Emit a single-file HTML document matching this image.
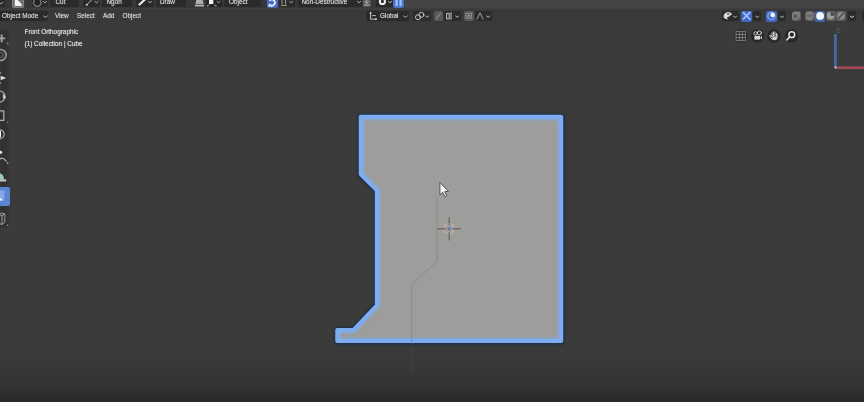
<!DOCTYPE html>
<html><head><meta charset="utf-8">
<style>
html,body{margin:0;padding:0;}
body{width:864px;height:402px;overflow:hidden;background:#3b3b3b;position:relative;font-family:"Liberation Sans",sans-serif;font-size:6.4px;color:#c8c8c8;}
.a{position:absolute;}
.t{position:absolute;white-space:nowrap;line-height:8px;height:8px;filter:blur(0.55px);text-shadow:0 0 0.7px #c9c9c9;}
.bx{position:absolute;border-radius:2px;filter:blur(0.6px);}
svg{position:absolute;left:0;top:0;overflow:visible;}
#fade{position:absolute;left:0;top:340px;width:864px;height:62px;background:linear-gradient(to bottom,rgba(0,0,0,0) 0%,rgba(0,0,0,0.05) 38%,rgba(0,0,0,0.13) 70%,rgba(0,0,0,0.22) 88%,rgba(0,0,0,0.32) 100%);}
</style></head><body>
<!-- top strip / header backgrounds -->
<div class="a" id="strip" style="left:0;top:0;width:864px;height:12px;background:linear-gradient(to bottom,#454545 0px,#444444 7px,#3d3d3d 9px,#373737 10.8px,#393939 12px);"></div>
<div class="a" id="hdr" style="left:0;top:12px;width:864px;height:11px;background:#393939;"></div>
<div class="a" id="stripL" style="left:0;top:0;width:406px;height:8px;background:linear-gradient(to right,#373737 0px,#373737 396px,rgba(55,55,55,0) 406px);filter:blur(0.7px);"></div>
<div class="a" id="tbar" style="left:0;top:30px;width:8px;height:198px;background:#313131;filter:blur(0.8px);"></div>

<!-- top strip widgets -->
<div class="bx" style="left:-3px;top:-3px;width:8px;height:10px;background:#2a2a2a;"></div>
<div class="bx" style="left:12px;top:-3px;width:12px;height:11px;background:#707070;"></div>
<div class="bx" style="left:31.5px;top:-3px;width:16.5px;height:10px;background:#2a2a2a;"></div>
<div class="bx" style="left:50px;top:-3px;width:29px;height:10px;background:#2a2a2a;"></div>
<div class="bx" style="left:83px;top:-3px;width:17px;height:10px;background:#2a2a2a;"></div>
<div class="bx" style="left:102px;top:-3px;width:30px;height:10px;background:#2a2a2a;"></div>
<div class="bx" style="left:136px;top:-3px;width:18px;height:10px;background:#2a2a2a;"></div>
<div class="bx" style="left:156px;top:-3px;width:30px;height:10px;background:#2a2a2a;"></div>
<div class="bx" style="left:205.5px;top:-3px;width:16px;height:10px;background:#242424;"></div>
<div class="bx" style="left:224px;top:-3px;width:37px;height:10px;background:#2a2a2a;"></div>
<div class="bx" style="left:267px;top:-3px;width:10.5px;height:10.5px;background:#466cc2;"></div>
<div class="bx" style="left:279px;top:-3px;width:15.5px;height:10px;background:#2a2a2a;"></div>
<div class="bx" style="left:298px;top:-3px;width:64px;height:10px;background:#2a2a2a;"></div>
<div class="bx" style="left:362.5px;top:-3px;width:8.5px;height:10px;background:#5c5c5c;"></div>
<div class="bx" style="left:376px;top:-3px;width:17px;height:10px;background:#2a2a2a;"></div>
<div class="bx" style="left:393px;top:-3px;width:11px;height:10.5px;background:#4a74c8;"></div>

<div class="t" style="left:55.5px;top:-1.7px;">Cut</div>
<div class="t" style="left:106.5px;top:-1.7px;">Ngon</div>
<div class="t" style="left:160px;top:-1.7px;">Draw</div>
<div class="t" style="left:229px;top:-1.7px;">Object</div>
<div class="t" style="left:301.5px;top:-1.7px;">Non-Destructive</div>

<!-- header row -->
<div class="bx" style="left:-3px;top:11.3px;width:51px;height:9.4px;background:#2a2a2a;"></div>
<div class="t" style="left:2px;top:12px;">Object Mode</div>
<div class="t" style="left:55px;top:12px;">View</div>
<div class="t" style="left:77px;top:12px;">Select</div>
<div class="t" style="left:103px;top:12px;">Add</div>
<div class="t" style="left:122.5px;top:12px;">Object</div>

<div class="bx" style="left:366px;top:10.5px;width:43px;height:10.5px;background:#2a2a2a;"></div>
<div class="t" style="left:380px;top:12px;">Global</div>
<div class="bx" style="left:413px;top:10.5px;width:18px;height:10.5px;background:#2c2c2c;"></div>
<div class="bx" style="left:434px;top:10.5px;width:9px;height:10.5px;background:#585858;"></div>
<div class="bx" style="left:443.5px;top:10.5px;width:17px;height:10.5px;background:#2a2a2a;"></div>
<div class="bx" style="left:464px;top:10.5px;width:10px;height:10.5px;background:#585858;"></div>
<div class="bx" style="left:474.5px;top:10.5px;width:17px;height:10.5px;background:#2c2c2c;"></div>

<!-- right header -->
<div class="bx" style="left:721.5px;top:10.5px;width:17px;height:10.5px;background:#2a2a2a;"></div>
<div class="bx" style="left:741px;top:10.5px;width:11px;height:11px;background:#4369c2;"></div>
<div class="bx" style="left:753px;top:10.5px;width:8px;height:10.5px;background:#2a2a2a;"></div>
<div class="bx" style="left:766px;top:10.5px;width:10.5px;height:11px;background:#4369c2;"></div>
<div class="bx" style="left:777.5px;top:10.5px;width:8px;height:10.5px;background:#2a2a2a;"></div>
<div class="bx" style="left:791.5px;top:11px;width:9px;height:9.5px;background:#5a5a5a;"></div>
<div class="bx" style="left:804.5px;top:10.5px;width:10.2px;height:10.5px;background:#5c5c5c;"></div>
<div class="bx" style="left:815px;top:10.5px;width:10.2px;height:11px;background:#4265a6;"></div>
<div class="bx" style="left:825.5px;top:10.5px;width:10.2px;height:10.5px;background:#5c5c5c;"></div>
<div class="bx" style="left:836px;top:10.5px;width:10.2px;height:10.5px;background:#5c5c5c;"></div>
<div class="bx" style="left:848px;top:10.5px;width:8px;height:10.5px;background:#2a2a2a;"></div>
<div class="bx" style="left:861.5px;top:10.5px;width:9px;height:10.5px;background:#2a2a2a;"></div>

<!-- viewport text -->
<div class="t" style="left:24.5px;top:28.3px;color:#dcdcdc;">Front Orthographic</div>
<div class="t" style="left:24.5px;top:39.5px;color:#dcdcdc;">(1) Collection | Cube</div>

<!-- toolbar selected -->
<div class="bx" style="left:-3px;top:186.5px;width:13px;height:19.5px;background:#5b84d2;border-radius:2px;"></div>

<!-- main svg -->
<svg width="864" height="402" viewBox="0 0 864 402">
  <defs>
    <filter id="b1" x="-5%" y="-5%" width="110%" height="110%"><feGaussianBlur stdDeviation="0.75"/></filter>
    <filter id="b2" x="-20%" y="-20%" width="140%" height="140%"><feGaussianBlur stdDeviation="0.55"/></filter>
    <filter id="b3" x="-20%" y="-20%" width="140%" height="140%"><feGaussianBlur stdDeviation="0.6"/></filter>
    <filter id="b4" x="-5%" y="-5%" width="110%" height="110%"><feGaussianBlur stdDeviation="0.75"/></filter>
    <filter id="b6" x="-5%" y="-5%" width="110%" height="110%"><feGaussianBlur stdDeviation="0.9"/></filter>
    <filter id="b5" x="-5%" y="-5%" width="110%" height="110%"><feGaussianBlur stdDeviation="1.3"/></filter>
    <clipPath id="cpB"><polygon points="360.8,116.9 561.2,116.9 561.2,340.9 337.3,340.9 337.3,330.1 353.4,330.1 376.9,305.3 376.9,190.2 360.8,174.2"/></clipPath>
  </defs>
  <g filter="url(#b6)" transform="translate(0.4,0.35)">
  <polygon points="360.8,116.9 561.2,116.9 561.2,340.9 337.3,340.9 337.3,330.1 353.4,330.1 376.9,305.3 376.9,190.2 360.8,174.2" fill="none" stroke="#1f2f4a" stroke-width="6.9" stroke-linejoin="round"/>
  </g>
  <polygon points="360.8,116.9 561.2,116.9 561.2,340.9 337.3,340.9 337.3,330.1 353.4,330.1 376.9,305.3 376.9,190.2 360.8,174.2" fill="#9d9d9b" stroke="none"/>
  <g clip-path="url(#cpB)">
    <polygon points="360.8,116.9 561.2,116.9 561.2,340.9 337.3,340.9 337.3,330.1 353.4,330.1 376.9,305.3 376.9,190.2 360.8,174.2" fill="none" stroke="#86aee8" stroke-width="7" stroke-linejoin="round" filter="url(#b5)" opacity="0.6"/>
  </g>
  <g filter="url(#b4)">
  <polygon points="360.8,116.9 561.2,116.9 561.2,340.9 337.3,340.9 337.3,330.1 353.4,330.1 376.9,305.3 376.9,190.2 360.8,174.2" fill="none" stroke="#7eacf0" stroke-width="4.1" stroke-linejoin="round"/>
  </g>
  <g filter="url(#b1)">
  <polyline points="437,196 437,261.5 411.6,284.5 411.6,338" fill="none" stroke="#898989" stroke-width="0.9"/>
  <line x1="411.6" y1="338" x2="411.6" y2="343.5" stroke="#6f92c6" stroke-width="0.9"/><line x1="411.6" y1="346" x2="411.6" y2="375" stroke="#464646" stroke-width="1"/>
  </g>
  <!-- 3D cursor -->
  <g filter="url(#b1)">
    <circle cx="449.2" cy="228.7" r="5" fill="none" stroke="#c4979a" stroke-width="1.8" stroke-dasharray="2 2"/>
    <circle cx="449.2" cy="228.7" r="5" fill="none" stroke="#e6dcdc" stroke-width="1.4" stroke-dasharray="2 2" stroke-dashoffset="2" opacity="0.55"/>
    <path d="M437.6 228.7H445.6M452.8 228.7H460.8M449.2 217.2V225.1M449.2 232.3V240.4" stroke="#6c6c6c" stroke-width="1.4" fill="none"/>
    <circle cx="449.2" cy="228.7" r="1.7" fill="#6480a8"/>
  </g>
  <!-- mouse cursor -->
  <g filter="url(#b3)">
    <path d="M439.90 182.40 L439.90 194.91 L442.75 192.34 L444.78 196.75 L446.71 195.83 L444.68 191.60 L448.46 191.42 Z" fill="#f2f2f2" stroke="#555" stroke-width="1" stroke-linejoin="round"/>
  </g>
  <!-- axis gizmo -->
  <g filter="url(#b2)">
    <line x1="835.4" y1="34" x2="835.4" y2="68" stroke="#4269a4" stroke-width="2.8"/>
    <line x1="835.4" y1="67.7" x2="866" y2="67.7" stroke="#a94858" stroke-width="2.5"/>
    <circle cx="835.6" cy="67.6" r="1" fill="#d8d0d8"/>
    <path d="M836.8 28.8H839.6L836.8 32.4H839.6" stroke="#4d6694" stroke-width="0.8" fill="none" opacity="0.85"/>
  </g>
</svg>

<!-- icons svg -->
<svg width="864" height="402" viewBox="0 0 864 402">
  <g filter="url(#b2)" fill="none" stroke-linecap="round" stroke-linejoin="round">
    <!-- top strip icons -->
    <path d="M-1 2.2L1 3.8L3 2.2" stroke="#bbb" stroke-width="0.9"/>
    <rect x="12.6" y="-2" width="11" height="9.3" rx="1" stroke="#8a8a8a" stroke-width="0.8"/>
    <path d="M14.8 -1H16.6L21.6 4V6H14.8Z" fill="#f2f2f2" stroke="none"/>
    <circle cx="37.3" cy="2.6" r="3.7" stroke="#7c7c7c" stroke-width="1.3" fill="#232323"/>
    <path d="M43.4 1.4L45 2.8L46.6 1.4" stroke="#bbb" stroke-width="0.9"/>
    <path d="M87 4.6L92.4 -1" stroke="#bdbdbd" stroke-width="1"/>
    <circle cx="86.8" cy="4.8" r="1.1" fill="#c8c8c8" stroke="none"/>
    <path d="M95 1.4L96.6 2.8L98.2 1.4" stroke="#bbb" stroke-width="0.9"/>
    <path d="M139.5 4.6L145.5 -1" stroke="#f0f0f0" stroke-width="2"/>
    <path d="M148.4 1.4L150 2.8L151.6 1.4" stroke="#bbb" stroke-width="0.9"/>
    <path d="M196.6 -1H202.4L204.2 6.4H194.8Z" fill="#b0b0b0" stroke="none"/>
    <path d="M195.6 4.4H203.4" stroke="#555" stroke-width="0.9"/>
    <rect x="209" y="-1" width="4.3" height="5" fill="#f4f4f4" stroke="none"/>
    <path d="M207.6 6.4V5.2H209M216 6.4V5.2H214.4" stroke="#aaa" stroke-width="0.8"/>
    <path d="M217 1.4L218.6 2.8L220.2 1.4" stroke="#bbb" stroke-width="0.9"/>
    <path d="M269.6 4.6A3 3 0 1 0 270 0.2" stroke="#eef2ff" stroke-width="1.7"/>
    <path d="M268.6 5.8H271.6" stroke="#dfe6ff" stroke-width="1.2"/>
    <path d="M282 -0.5V3.8M285.6 -0.5V3.8M281.4 5.4H286.4" stroke="#b0b0b0" stroke-width="0.9"/>
    <path d="M289.6 1.4L291.2 2.8L292.8 1.4" stroke="#bbb" stroke-width="0.9"/>
    <path d="M357.4 1.4L359 2.8L360.6 1.4" stroke="#bbb" stroke-width="0.9"/>
    <path d="M366.7 -1V3M365 1.6L366.7 3.4L368.4 1.6M364.2 5H369.2" stroke="#b8b8b8" stroke-width="0.9"/>
    <circle cx="382.4" cy="1.4" r="2.6" stroke="#f0f0f0" stroke-width="2"/>
    <path d="M388.4 1.4L390 2.8L391.6 1.4" stroke="#bbb" stroke-width="0.9"/>
    <path d="M396.6 -1V6M400.6 -1V6" stroke="#9fc0ff" stroke-width="2.2" stroke-linecap="butt"/>

    <!-- header icons -->
    <path d="M43.6 16.0L45.4 17.4L47.2 16.0" stroke="#c4c4c4" stroke-width="0.9"/>
    <path d="M370.6 13V19.2H376M372.6 15.6H375.4" stroke="#c0c0c0" stroke-width="1"/>
    <circle cx="370.6" cy="13" r="0.9" fill="#ddd" stroke="none"/>
    <circle cx="376" cy="19.2" r="0.9" fill="#ddd" stroke="none"/>
    <path d="M403.6 16.0L405.4 17.4L407.2 16.0" stroke="#c4c4c4" stroke-width="0.9"/>
    <circle cx="418" cy="17.2" r="2.5" stroke="#c4c4c4" stroke-width="1"/>
    <circle cx="421.4" cy="14.8" r="2.5" stroke="#c4c4c4" stroke-width="1"/>
    <path d="M425.6 16.0L427.2 17.2L428.8 16.0" stroke="#c4c4c4" stroke-width="0.9"/>
    <path d="M436.4 18.6L440.4 13.4" stroke="#7c7c7c" stroke-width="1.6"/>
    <path d="M447 13.4H449.2V19H447ZM451 12.6V19.4" stroke="#c8c8c8" stroke-width="1"/>
    <path d="M455.6 16.0L457.2 17.2L458.8 16.0" stroke="#c4c4c4" stroke-width="0.9"/>
    <rect x="466.6" y="13.4" width="4.8" height="4.8" stroke="#9a9a9a" stroke-width="0.9"/><circle cx="469" cy="15.8" r="0.9" fill="#c8c8c8" stroke="none"/>
    <path d="M477 19L480 12.8L483 19" stroke="#b0b0b0" stroke-width="0.9"/>
    <path d="M486.6 16.0L488.2 17.2L489.8 16.0" stroke="#c4c4c4" stroke-width="0.9"/>

    <!-- right header icons -->
    <path d="M724.4 14.4C725.6 12.2 730 11.8 731.6 14C730.4 16 727.6 16.4 726.6 17.2L727.2 19.2L724.2 17.6Z" fill="#e4e4e4" stroke="#e4e4e4" stroke-width="0.8"/>
    <ellipse cx="728.2" cy="13.9" rx="1.6" ry="0.9" fill="#666" stroke="none"/>
    <path d="M733.4 16.2L735 17.4L736.6 16.2" stroke="#c4c4c4" stroke-width="0.9"/>
    <path d="M743.4 19L750 12.4M743.4 12.6L750 19.2" stroke="#a9c4ff" stroke-width="1.5"/>
    <path d="M755.6 16.2L757.2 17.4L758.8 16.2" stroke="#c4c4c4" stroke-width="0.9"/>
    <circle cx="771.4" cy="15.9" r="3.6" stroke="#86a8f0" stroke-width="1.2"/>
    <circle cx="772.6" cy="15" r="2.2" fill="#f4f6ff" stroke="none"/>
    <path d="M780.4 16.2L782 17.4L783.6 16.2" stroke="#c4c4c4" stroke-width="0.9"/>
    <rect x="793.2" y="13.6" width="4.6" height="5.4" stroke="#9a9a9a" stroke-width="0.9"/>
    <path d="M795.2 12.4H799.4V17.4" stroke="#8c8c8c" stroke-width="0.9"/>
    <circle cx="809.6" cy="15.8" r="3.6" stroke="#8e8e8e" stroke-width="1" fill="#777"/>
    <path d="M806 15.8H813.2" stroke="#5a5a5a" stroke-width="0.8"/>
    <circle cx="820.1" cy="15.9" r="3.9" fill="#f6f8ff" stroke="none"/>
    <circle cx="830.6" cy="15.8" r="3.7" fill="#9c9c9c" stroke="none"/>
    <path d="M830.6 15.8V12.1A3.7 3.7 0 0 1 834.3 15.8Z" fill="#444" stroke="none"/>
    <circle cx="841.1" cy="15.8" r="3.7" fill="#8c8c8c" stroke="none"/>
    <path d="M839 18L843.2 13.6" stroke="#4a4a4a" stroke-width="1.4"/>
    <path d="M850.2 16.2L851.9 17.4L853.6 16.2" stroke="#d0d0d0" stroke-width="1"/>

    <!-- nav gizmo buttons -->
    <circle cx="741" cy="35.9" r="6.7" fill="#272727" stroke="none"/>
    <circle cx="757.5" cy="35.9" r="6.7" fill="#272727" stroke="none"/>
    <circle cx="774" cy="35.9" r="6.7" fill="#272727" stroke="none"/>
    <circle cx="791.4" cy="35.9" r="6.7" fill="#272727" stroke="none"/>
    <path d="M736.4 31.4H745.4V40.6H736.4ZM739.4 31.4V40.6M742.4 31.4V40.6M736.4 34.4H745.4M736.4 37.6H745.4" stroke="#8e8e8e" stroke-width="0.8"/>
    <circle cx="755.6" cy="33.4" r="1.7" stroke="#cfcfcf" stroke-width="1"/>
    <circle cx="759.4" cy="33" r="2" stroke="#cfcfcf" stroke-width="1"/>
    <rect x="754.4" y="36" width="5.6" height="3.6" fill="#d8d8d8" stroke="none"/>
    <path d="M760.4 37L762 36V39.6L760.4 38.6Z" fill="#c0c0c0" stroke="none"/>
    <path d="M770.6 35.2L772 37V32.8M773.4 36V31.8M774.9 36V32M776.4 36.4V33C777.4 35 777.6 37.6 776 39.6H772.4C771 38.6 770.4 36.8 769.8 35.6" stroke="#d4d4d4" stroke-width="1"/>
    <path d="M772.2 36.4H776.6V39.4H772.6Z" fill="#cfcfcf" stroke="none"/>
    <circle cx="791.8" cy="34.7" r="2.9" stroke="#e0e0e0" stroke-width="1.5"/>
    <path d="M789.6 37.1L786.8 39.9" stroke="#e0e0e0" stroke-width="1.5"/>

    <!-- toolbar icons -->
    <path d="M-1 38.4H5.2M1.7 34.6V42.2" stroke="#a4a4a4" stroke-width="1.9" stroke-linecap="butt"/>
    <circle cx="7.6" cy="43.6" r="1" fill="#7c7c7c" stroke="none"/>
    <circle cx="0.6" cy="55" r="5.5" stroke="#9a9a9a" stroke-width="1.6"/><circle cx="0.6" cy="55" r="2.6" stroke="#6a6a6a" stroke-width="1"/>
    <path d="M1.2 76.4L5.4 78L1.2 79.6Z" fill="#ececec" stroke="#ececec" stroke-width="0.6"/>
    <circle cx="0" cy="73" r="0.9" fill="#aaa" stroke="none"/>
    <circle cx="0" cy="83" r="0.9" fill="#aaa" stroke="none"/>
    <circle cx="-0.6" cy="96.5" r="5.6" stroke="#949494" stroke-width="1.5"/>
    <path d="M3.6 94.8L5.4 97.6L3.6 98.2Z" fill="#ececec" stroke="#ececec" stroke-width="0.6"/>
    <path d="M-1 110.8H3.8V120.4H-1" stroke="#b0b0b0" stroke-width="1.2"/>
    <rect x="-1" y="114.6" width="2.6" height="4" fill="#262626" stroke="none"/>
    <circle cx="7.6" cy="122.2" r="0.8" fill="#8c8c8c" stroke="none"/>
    <circle cx="-0.2" cy="134.2" r="4.4" stroke="#a8a8a8" stroke-width="1.3"/>
    <path d="M0.2 131.6V136.8" stroke="#f4f4f4" stroke-width="1.6"/>
    <circle cx="0.6" cy="152.2" r="1.5" fill="#f0f0f0" stroke="none"/>
    <path d="M-1 159.2C2 157.4 4.6 158.6 6 161" stroke="#b4b4b4" stroke-width="1.2"/>
    <circle cx="7.6" cy="163" r="0.9" fill="#9a9a9a" stroke="none"/>
    <path d="M-1 179.4V173.6C1.6 173.2 4 175.4 4 179.4Z" fill="#9acdb4" stroke="none"/>
    <path d="M-1 180.4H6.2" stroke="#c4c4c4" stroke-width="2.2" stroke-linecap="butt"/>
    <rect x="-1" y="190.4" width="5.4" height="10.4" fill="#83a6e6" stroke="none"/>
    <path d="M-0.5 197.6L2 199.8L-0.5 200.4Z" fill="#f6f8ff" stroke="#f6f8ff" stroke-width="0.8"/>
    <path d="M-1 214.4L2.2 213L4.8 214V222.4L2 224.4L-1 223.4M2 215.6V224.4M2 215.6L4.8 214M2 215.6L-1 214.6" stroke="#a6a6a6" stroke-width="0.9"/>
    <circle cx="7.6" cy="225.2" r="0.8" fill="#9a9a9a" stroke="none"/>
  </g>
</svg>
<div id="fade"></div>
</body></html>
